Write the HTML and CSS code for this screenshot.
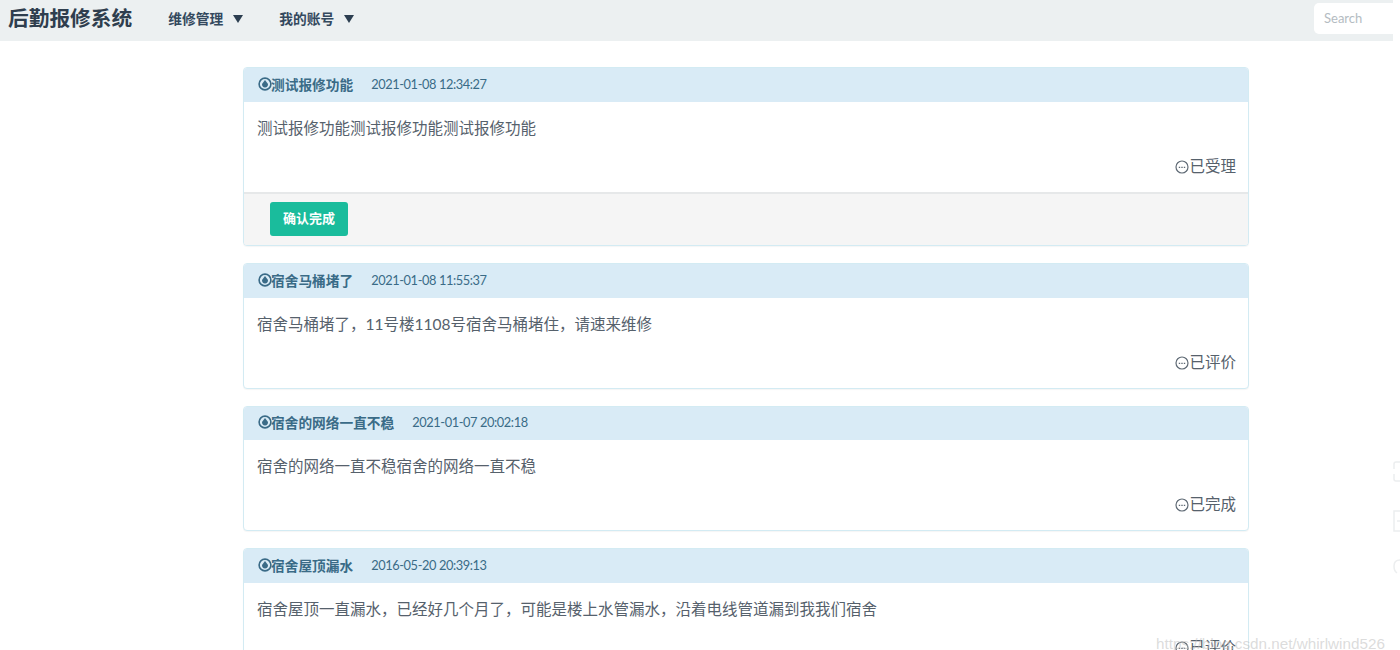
FILE: index.html
```html
<!DOCTYPE html>
<html lang="zh-CN">
<head>
<meta charset="utf-8">
<title>后勤报修系统</title>
<link rel="stylesheet" href="styles.css">
</head>
<body>
<div class="page">
  <nav class="navbar">
    <a class="brand">后勤报修系统</a>
    <a class="nav-item nav-first">维修管理<span class="caret"></span></a>
    <a class="nav-item">我的账号<span class="caret"></span></a>
    <input class="search" type="text" placeholder="Search">
  </nav>
  <main class="container">
    <section class="panel">
      <header class="panel-heading">
        <svg class="tint" viewBox="0 0 14 14"><circle cx="7" cy="7" r="5.9"/><path d="M7 2.9 L10 6.9 Q10 10.2 7 10.6 Q4 10.2 4 6.9 Z"/></svg><span class="title">测试报修功能</span><span class="date">2021-01-08 12:34:27</span>
      </header>
      <div class="panel-body">
        <p class="content">测试报修功能测试报修功能测试报修功能</p>
        <div class="status"><svg class="dots" viewBox="0 0 14 14"><circle cx="7" cy="7" r="6"/><path d="M3.8 7.3h1.4M6.3 7.3h1.4M8.8 7.3h1.4"/></svg>已受理</div>
      </div>
      <footer class="panel-footer"><button class="btn">确认完成</button></footer>
    </section>
    <section class="panel">
      <header class="panel-heading">
        <svg class="tint" viewBox="0 0 14 14"><circle cx="7" cy="7" r="5.9"/><path d="M7 2.9 L10 6.9 Q10 10.2 7 10.6 Q4 10.2 4 6.9 Z"/></svg><span class="title">宿舍马桶堵了</span><span class="date">2021-01-08 11:55:37</span>
      </header>
      <div class="panel-body">
        <p class="content">宿舍马桶堵了，11号楼1108号宿舍马桶堵住，请速来维修</p>
        <div class="status"><svg class="dots" viewBox="0 0 14 14"><circle cx="7" cy="7" r="6"/><path d="M3.8 7.3h1.4M6.3 7.3h1.4M8.8 7.3h1.4"/></svg>已评价</div>
      </div>
    </section>
    <section class="panel">
      <header class="panel-heading">
        <svg class="tint" viewBox="0 0 14 14"><circle cx="7" cy="7" r="5.9"/><path d="M7 2.9 L10 6.9 Q10 10.2 7 10.6 Q4 10.2 4 6.9 Z"/></svg><span class="title">宿舍的网络一直不稳</span><span class="date">2021-01-07 20:02:18</span>
      </header>
      <div class="panel-body">
        <p class="content">宿舍的网络一直不稳宿舍的网络一直不稳</p>
        <div class="status"><svg class="dots" viewBox="0 0 14 14"><circle cx="7" cy="7" r="6"/><path d="M3.8 7.3h1.4M6.3 7.3h1.4M8.8 7.3h1.4"/></svg>已完成</div>
      </div>
    </section>
    <section class="panel">
      <header class="panel-heading">
        <svg class="tint" viewBox="0 0 14 14"><circle cx="7" cy="7" r="5.9"/><path d="M7 2.9 L10 6.9 Q10 10.2 7 10.6 Q4 10.2 4 6.9 Z"/></svg><span class="title">宿舍屋顶漏水</span><span class="date">2016-05-20 20:39:13</span>
      </header>
      <div class="panel-body">
        <p class="content">宿舍屋顶一直漏水，已经好几个月了，可能是楼上水管漏水，沿着电线管道漏到我我们宿舍</p>
        <div class="status"><svg class="dots" viewBox="0 0 14 14"><circle cx="7" cy="7" r="6"/><path d="M3.8 7.3h1.4M6.3 7.3h1.4M8.8 7.3h1.4"/></svg>已评价</div>
      </div>
    </section>
  </main>
</div>
<svg class="edge-icons" viewBox="0 0 7 130">
  <path d="M7 2H3Q1 2 1 4V9M1 14V19Q1 21 3 21H7"/>
  <path d="M7 51H1V71H7M4 61H7"/>
  <path d="M7 100Q1 100 1 106Q1 111 4 113"/>
</svg>
<div class="watermark">https://blog.csdn.net/whirlwind526</div>
</body>
</html>
```

FILE: styles.css
```css
* { box-sizing: border-box; }
html, body {
  margin: 0;
  height: 650px;
  overflow: hidden;
  background: #fff;
}
body {
  font-family: "Lato", "Noto Sans CJK SC", sans-serif;
  color: #2c3e50;
}
.page { width: 1393px; }
.navbar {
  display: flex;
  align-items: center;
  height: 41px;
  background: #ecf0f1;
  padding: 0 0 5px 8px;
}
.brand {
  font-size: 20.7px;
  font-weight: 700;
  line-height: 36px;
  color: #2f3e4e;
}
.nav-item {
  display: flex;
  align-items: center;
  font-size: 13.75px;
  font-weight: 700;
  color: #34495e;
  width: 111px;
}
.nav-first { margin-left: 36px; }
.caret {
  width: 0;
  height: 0;
  margin-left: 10px;
  margin-top: 2px;
  border-left: 5.5px solid transparent;
  border-right: 5.5px solid transparent;
  border-top: 8px solid #2c3e50;
}
.search {
  width: 79px;
  height: 31px;
  margin-left: auto;
  margin-top: 1px;
  padding: 0 10px 2px;
  border: 0;
  border-radius: 5px 0 0 5px;
  background: #fff;
  font-family: "Lato", sans-serif;
  font-size: 13px;
  outline: 0;
}
.search::placeholder { color: #b4bcc2; opacity: 1; }
.container {
  width: 1006px;
  margin-left: 243px;
  padding-top: 26px;
}
.panel {
  border: 1px solid #d3ebf3;
  border-radius: 4px;
  margin-bottom: 17px;
  background: #fff;
  box-shadow: 0 1px 1px rgba(0,0,0,.04);
  overflow: hidden;
}
.panel-heading {
  display: flex;
  align-items: center;
  height: 33.5px;
  padding: 0 0 2px 14px;
  background: #d9ebf6;
  color: #3a6b87;
}
.tint {
  width: 14px;
  height: 14px;
  flex: none;
  margin-right: -1px;
}
.tint circle { fill: none; stroke: #3a6b87; stroke-width: 1.6; }
.tint path { fill: #3a6b87; }
.title {
  font-size: 13.7px;
  font-weight: 700;
}
.date {
  font-size: 12.8px;
  letter-spacing: -.4px;
  margin-left: 18px;
}
.panel-body {
  height: 90px;
  padding: 15px 12px 0 13px;
}
.content {
  margin: 0;
  font-size: 15.5px;
  line-height: 22px;
  color: #56616c;
}
.status {
  display: flex;
  align-items: center;
  justify-content: flex-end;
  margin-top: 16px;
  font-size: 15.5px;
  line-height: 22px;
  color: #56616c;
}
.dots {
  width: 14px;
  height: 14px;
  flex: none;
  margin-top: 2px;
}
.dots circle { fill: none; stroke: #5f6a75; stroke-width: 1.2; }
.dots path { fill: none; stroke: #5f6a75; stroke-width: 1.3; }
.panel-footer {
  height: 53.5px;
  padding: 8.5px 0 0 26px;
  background: #f5f5f5;
  border-top: 2px solid #e6e8e9;
}
.btn {
  display: block;
  width: 78px;
  height: 34px;
  padding: 0 0 3px;
  border: 0;
  border-radius: 3px;
  background: #1abc9c;
  color: #fff;
  font-family: "Noto Sans CJK SC", sans-serif;
  font-size: 13px;
  font-weight: 700;
}
.edge-icons {
  position: absolute;
  left: 1393px;
  top: 460px;
  width: 7px;
  height: 130px;
  fill: none;
  stroke: #eceeef;
  stroke-width: 1.5;
}
.watermark {
  position: absolute;
  left: 1156px;
  top: 635px;
  font-family: "Liberation Sans", sans-serif;
  font-size: 15.25px;
  line-height: 18px;
  white-space: nowrap;
  color: rgba(190,190,190,.55);
}
```
